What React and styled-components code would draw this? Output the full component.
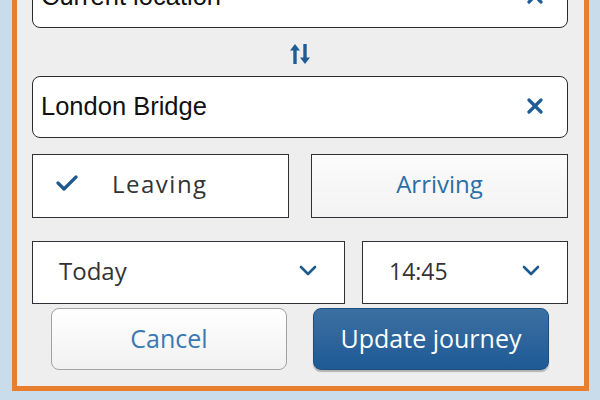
import React from "react";
import styled, { createGlobalStyle } from "styled-components";

const Global = createGlobalStyle`
  html, body { margin: 0; padding: 0; }
  body { width: 600px; height: 400px; overflow: hidden; background: #c8dcec; }
`;

const Page = styled.div`
  width: 600px;
  height: 400px;
  box-sizing: border-box;
  padding: 0 11px 9px 12px;
  background: #c8dcec;
  overflow: hidden;
  display: flex;
  flex-direction: column;
  justify-content: flex-end;
`;

const Panel = styled.div`
  box-sizing: border-box;
  border: 5px solid #e77f2e;
  border-top: none;
  background: #eeeeee;
  padding: 0 16px 16px 15px;
  display: flex;
  flex-direction: column;
`;

const Field = styled.div`
  height: 62px;
  box-sizing: border-box;
  border: 1.5px solid #2b2b2b;
  border-radius: 8px;
  background: #ffffff;
  display: flex;
  align-items: center;
  padding: 0 24px 2px 8px;
  font-family: "Liberation Sans", Arial, sans-serif;
  font-size: 25.5px;
  color: #111;
`;

const FieldText = styled.span`
  flex: 1;
`;

const SwapRow = styled.div`
  height: 48px;
  display: flex;
  align-items: center;
  justify-content: center;
  padding-top: 4px;
  box-sizing: border-box;
`;

const ToggleRow = styled.div`
  margin-top: 16px;
  display: grid;
  grid-template-columns: 1fr 1fr;
  gap: 22px;
`;

const Toggle = styled.div`
  height: 64px;
  box-sizing: border-box;
  border: 1.5px solid #2f2f35;
  background: ${(p) => (p.$active ? "#ffffff" : "linear-gradient(#fbfbfb, #f3f3f3)")};
  display: flex;
  align-items: center;
  justify-content: ${(p) => (p.$active ? "flex-start" : "center")};
  padding: 0 0 6px ${(p) => (p.$active ? "23px" : "0")};
  font-family: "Open Sans", sans-serif;
  font-size: 24px;
  letter-spacing: ${(p) => (p.$active ? "1.5px" : "0")};
  color: ${(p) => (p.$active ? "#333" : "#2b6ea8")};
`;

const CheckWrap = styled.span`
  display: flex;
  margin-right: 34px;
`;

const SelectRow = styled.div`
  margin-top: 23px;
  display: grid;
  grid-template-columns: 313px 1fr;
  gap: 17px;
`;

const Select = styled.div`
  height: 63px;
  box-sizing: border-box;
  border: 1.5px solid #2f2f35;
  background: #ffffff;
  display: flex;
  align-items: center;
  justify-content: space-between;
  padding: 0 27px 4px 26px;
  font-family: "Open Sans", sans-serif;
  font-size: ${(p) => p.$size || "24px"};
  color: #333;
`;

const ButtonRow = styled.div`
  margin-top: 4px;
  padding: 0 19px;
  display: grid;
  grid-template-columns: 1fr 1fr;
  gap: 26px;
`;

const Button = styled.div`
  height: 62px;
  box-sizing: border-box;
  border-radius: 8px;
  display: flex;
  align-items: center;
  justify-content: center;
  padding-bottom: 3px;
  font-family: "Open Sans", sans-serif;
  font-size: 25px;
  border: 1.5px solid ${(p) => (p.$primary ? "#1d4f80" : "#a2a2a2")};
  background: ${(p) =>
    p.$primary ? "linear-gradient(#3c70a2, #1e5a95)" : "linear-gradient(#ffffff, #f1f1f1)"};
  color: ${(p) => (p.$primary ? "#ffffff" : "#3a7ab2")};
  box-shadow: ${(p) => (p.$primary ? "0 2px 1px rgba(0,0,0,0.25)" : "none")};
`;

const Clear = () => (
  <svg width="16" height="16" viewBox="0 0 16 16">
    <path d="M2 2 L14 14 M14 2 L2 14" stroke="#1f5c96" strokeWidth="3.2" strokeLinecap="round" />
  </svg>
);

const Swap = () => (
  <svg width="22" height="22" viewBox="0 0 22 22">
    <path d="M6 21 V5" stroke="#1f5c96" strokeWidth="3.4" />
    <path d="M1 7.5 L6 1 L11 7.5 Z" fill="#1f5c96" />
    <path d="M16 1 V17" stroke="#1f5c96" strokeWidth="3.4" />
    <path d="M11 14.5 L16 21 L21 14.5 Z" fill="#1f5c96" />
  </svg>
);

const Check = () => (
  <svg width="22" height="16" viewBox="0 0 22 16">
    <path d="M2 8 L8 14 L20 2" fill="none" stroke="#1f5a8f" strokeWidth="3.2" strokeLinecap="round" strokeLinejoin="round" />
  </svg>
);

const Chevron = () => (
  <svg width="18" height="11" viewBox="0 0 18 11">
    <path d="M2 2 L9 9 L16 2" fill="none" stroke="#1f5a8f" strokeWidth="2.6" strokeLinecap="round" strokeLinejoin="round" />
  </svg>
);

export default function App() {
  return (
    <>
      <Global />
      <Page>
        <Panel>
          <Field>
            <FieldText>Current location</FieldText>
            <Clear />
          </Field>
          <SwapRow>
            <Swap />
          </SwapRow>
          <Field>
            <FieldText>London Bridge</FieldText>
            <Clear />
          </Field>
          <ToggleRow>
            <Toggle $active>
              <CheckWrap>
                <Check />
              </CheckWrap>
              Leaving
            </Toggle>
            <Toggle>Arriving</Toggle>
          </ToggleRow>
          <SelectRow>
            <Select>
              Today
              <Chevron />
            </Select>
            <Select $size="23px">
              14:45
              <Chevron />
            </Select>
          </SelectRow>
          <ButtonRow>
            <Button>Cancel</Button>
            <Button $primary>Update journey</Button>
          </ButtonRow>
        </Panel>
      </Page>
    </>
  );
}
